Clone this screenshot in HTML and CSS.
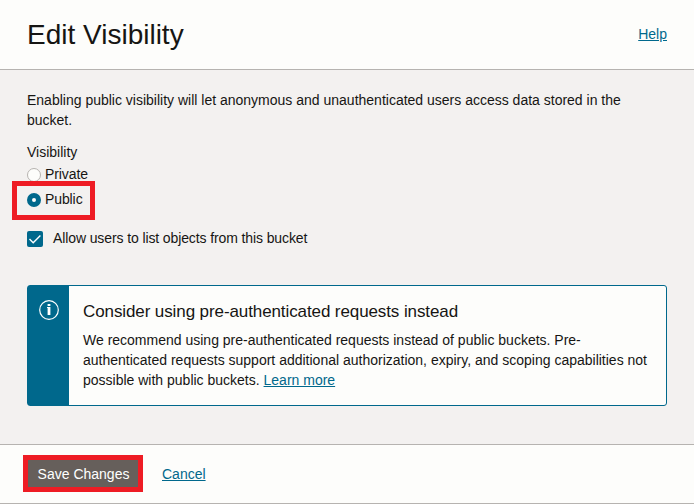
FILE: index.html
```
<!DOCTYPE html>
<html lang="en">
<head>
<meta charset="utf-8">
<title>Edit Visibility</title>
<link rel="stylesheet" href="styles.css">
</head>
<body>
<div class="dialog">
  <header class="header">
    <h1 class="title">Edit Visibility</h1>
    <a class="link help" href="#">Help</a>
  </header>
  <main class="content">
    <p class="intro">Enabling public visibility will let anonymous and unauthenticated users access data stored in the bucket.</p>
    <div class="legend">Visibility</div>
    <div class="option"><span class="radio"></span><span class="option-label">Private</span></div>
    <div class="option public"><span class="radio selected"></span><span class="option-label">Public</span><span class="highlight"></span></div>
    <div class="check-row">
      <svg class="checkbox" viewBox="0 0 16 16"><rect width="16" height="16" rx="2" fill="#00688c"/><path d="M2.5 8 6.2 11.7 13.4 4.5" fill="none" stroke="#fff" stroke-width="1.4"/></svg>
      <span class="check-label">Allow users to list objects from this bucket</span>
    </div>
    <section class="alert">
      <div class="alert-side">
        <svg class="info" viewBox="0 0 20 20"><circle cx="10" cy="10" r="9.3" fill="none" stroke="#fff" stroke-width="1.2"/><path d="M8.6 4h2.8v2.1H8.6zM8 7h3.4v8H8.6V8H8z" fill="#fff"/></svg>
      </div>
      <div class="alert-body">
        <h2 class="alert-title">Consider using pre-authenticated requests instead</h2>
        <p class="alert-text">We recommend using pre-authenticated requests instead of public buckets. Pre-authenticated requests support additional authorization, expiry, and scoping capabilities not possible with public buckets. <a class="link" href="#">Learn more</a></p>
      </div>
    </section>
  </main>
  <footer class="footer">
    <button class="save" type="button">Save Changes</button>
    <a class="link" href="#">Cancel</a>
  </footer>
</div>
</body>
</html>
```
FILE: styles.css
```
* { box-sizing: border-box; }
body {
  margin: 0;
  font: 14px/20px "Liberation Sans", Arial, sans-serif;
  color: #161513;
  background: #f3f1f0;
}
h1, h2, p { margin: 0; font-weight: 400; }
.dialog { display: flex; flex-direction: column; height: 504px; }
.header {
  display: flex;
  align-items: center;
  justify-content: space-between;
  height: 70px;
  padding: 0 27px;
  background: #fdfdfb;
  border-bottom: 1px solid #b6b3b0;
}
.title { font-size: 28px; line-height: 36px; }
.link { color: #00688c; text-decoration: underline; }
.help { margin-bottom: 2px; }
.content { flex: 1; padding: 20px 27px 0; }
.legend { margin-top: 12px; margin-bottom: -1px; }
.option { display: flex; align-items: center; height: 25px; position: relative; }
.option-label { letter-spacing: -0.1px; }
.radio {
  width: 14px;
  height: 14px;
  border: 1px solid #b6b3b0;
  border-radius: 50%;
  background: #fdfdfb;
  margin: 2px 4px 0 0;
}
.radio.selected { border: 5px solid #00688c; }
.highlight {
  position: absolute;
  left: -15px;
  top: -5px;
  width: 83px;
  height: 39px;
  border: 5px solid #ee1c24;
}
.check-row { display: flex; align-items: center; gap: 10px; height: 20px; margin-top: 17px; }
.check-label { letter-spacing: -0.11px; }
.checkbox { width: 16px; height: 16px; margin-top: 2px; }
.alert {
  display: flex;
  width: 640px;
  height: 121px;
  margin-top: 37px;
  border: 1px solid #00688c;
  border-radius: 3px;
  background: #fdfdfb;
}
.alert-side { width: 41px; padding: 14px 0 0 11px; background: #00688c; }
.info { display: block; width: 20px; height: 20px; }
.alert-body { flex: 1; padding: 14px 14px 0; }
.alert-title { font-size: 17px; line-height: 24px; margin-bottom: 6px; letter-spacing: -0.1px; }
.footer {
  display: flex;
  align-items: center;
  gap: 19px;
  height: 60px;
  padding-left: 23px;
  background: #fdfdfb;
  border: solid #b6b3b0;
  border-width: 1px 0;
}
.save {
  width: 120px;
  height: 37px;
  margin-bottom: 2px;
  padding: 2px 0 0 1px;
  font: inherit;
  color: #fff;
  background: #665f5b;
  border: 5px solid #ee1c24;
}
```
